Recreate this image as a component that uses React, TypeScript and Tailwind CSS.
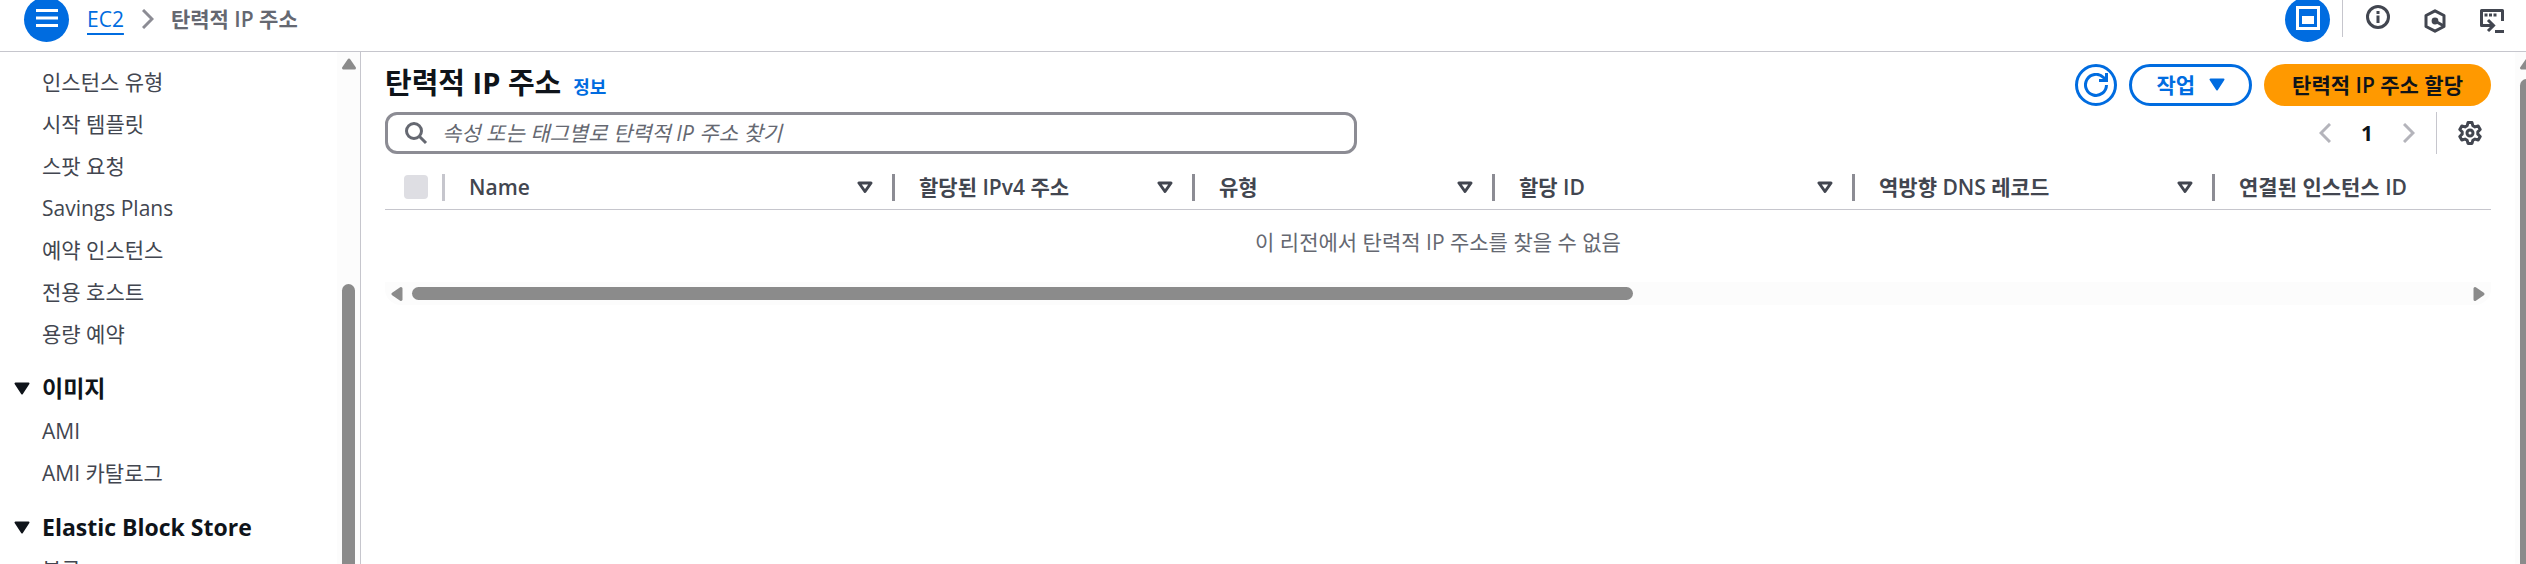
import React from 'react';

type IconProps = { className?: string };

const MenuIcon: React.FC<IconProps> = ({ className }) => (
  <svg viewBox="0 0 22 18" className={className} fill="currentColor" aria-hidden="true">
    <path d="M0 0h22v3H0zM0 7.500h22v3H0zM0 15h22v3H0z" />
  </svg>
);

const ChevronIcon: React.FC<IconProps> = ({ className }) => (
  <svg viewBox="0 0 12 20" className={className} fill="none" stroke="currentColor" strokeWidth="3" aria-hidden="true">
    <path d="M1 1l9 9-9 9" />
  </svg>
);

const PanelIcon: React.FC<IconProps> = ({ className }) => (
  <svg viewBox="0 0 24 24" className={className} aria-hidden="true">
    <path d="M1.500 1.500h21v21h-21z" fill="none" stroke="currentColor" strokeWidth="3" />
    <path d="M6 10h12v8H6z" fill="currentColor" />
  </svg>
);

const InfoIcon: React.FC<IconProps> = ({ className }) => (
  <svg viewBox="0 0 24 24" className={className} fill="none" stroke="currentColor" strokeWidth="3" aria-hidden="true">
    <circle cx="12" cy="12" r="10.5" />
    <path d="M12 10.500V18M12 6v3" />
  </svg>
);

const HexIcon: React.FC<IconProps> = ({ className }) => (
  <svg viewBox="0 0 24 24" className={className} fill="none" stroke="currentColor" strokeWidth="3" aria-hidden="true">
    <path d="M12 1.800l9 4.700v11l-9 4.700-9-4.700v-11z" strokeLinejoin="round" />
    <circle cx="12" cy="12" r="3.4" fill="currentColor" stroke="none" />
    <path d="M12 12l8 4.500" />
  </svg>
);

const ShellIcon: React.FC<IconProps> = ({ className }) => (
  <svg viewBox="0 0 24 24" className={className} fill="none" stroke="currentColor" strokeWidth="3" strokeLinejoin="round" aria-hidden="true">
    <path d="M22.500 12V1.500h-21v15H13" />
    <path d="M8 11l5.500 5.500L8 22" strokeLinejoin="miter" />
    <path d="M15 22.500h9" />
    <path d="M4.500 6h13" strokeDasharray="3 1.5" />
  </svg>
);

const SearchIcon: React.FC<IconProps> = ({ className }) => (
  <svg viewBox="0 0 24 24" className={className} fill="none" stroke="currentColor" strokeWidth="3" aria-hidden="true">
    <circle cx="10" cy="10" r="7.5" />
    <path d="M15 15l7 7" />
  </svg>
);

const RefreshIcon: React.FC<IconProps> = ({ className }) => (
  <svg viewBox="0 0 24 24" className={className} fill="none" stroke="currentColor" strokeWidth="3" aria-hidden="true">
    <path d="M22.500 12a10.500 10.500 0 1 1-3-7.500L22 7" />
    <path d="M22.500 0v7.500H15" />
  </svg>
);

const GearIcon: React.FC<IconProps> = ({ className }) => (
  <svg viewBox="0 0 24 24" className={className} fill="none" stroke="currentColor" strokeWidth="3" strokeLinejoin="round" aria-hidden="true">
    <path d="M10 1.500h4l.8 3.200 2.200 1.200 3.200-.9 2 3.500-2.400 2.300v2.400l2.400 2.300-2 3.500-3.200-.9-2.200 1.200-.8 3.200h-4l-.8-3.200L7 18.100l-3.200.9-2-3.500 2.400-2.300v-2.400L1.800 8.500l2-3.500L7 5.900l2.200-1.200z" />
    <circle cx="12" cy="12" r="3" />
  </svg>
);

const CaretDown: React.FC<IconProps> = ({ className }) => (
  <svg viewBox="0 0 16 13" className={className} fill="currentColor" stroke="currentColor" strokeWidth="2" strokeLinejoin="round" aria-hidden="true">
    <path d="M1.500 1.500h13L8 11.500z" />
  </svg>
);

const SortIcon: React.FC<IconProps> = ({ className }) => (
  <svg viewBox="0 0 16 13" className={className} fill="none" stroke="currentColor" strokeWidth="3" strokeLinejoin="round" aria-hidden="true">
    <path d="M2 2h12L8 10.500z" />
  </svg>
);

const ScrollArrow: React.FC<IconProps> = ({ className }) => (
  <svg viewBox="0 0 16 12" className={className} fill="#8b8b8b" stroke="#8b8b8b" strokeWidth="3" strokeLinejoin="round" aria-hidden="true">
    <path d="M2.500 10h11L8 2z" />
  </svg>
);

const sections = [
  { items: ['인스턴스 유형', '시작 템플릿', '스팟 요청', 'Savings Plans', '예약 인스턴스', '전용 호스트', '용량 예약'] },
  { title: '이미지', items: ['AMI', 'AMI 카탈로그'] },
  { title: 'Elastic Block Store', items: ['볼륨'] },
];

const columns = [
  { label: 'Name', width: 'w-[450px]' },
  { label: '할당된 IPv4 주소', width: 'w-[300px]' },
  { label: '유형', width: 'w-[300px]' },
  { label: '할당 ID', width: 'w-[360px]' },
  { label: '역방향 DNS 레코드', width: 'w-[360px]' },
];

const TopBar: React.FC = () => (
  <header className="flex h-[52px] shrink-0 items-start justify-between border-b border-[#c6c6cd] pl-6 pr-[22px]">
    <div className="flex items-start">
      <button aria-label="메뉴" className="-mt-[3px] flex size-[45px] items-center justify-center rounded-full bg-[#006ce0] text-white">
        <MenuIcon className="-mt-1 h-[18px] w-[22px]" />
      </button>
      <nav aria-label="Breadcrumb" className="ml-[18px] flex h-[38px] items-center">
        <a href="#ec2" className="text-[#006ce0] underline decoration-2 underline-offset-[6px]">EC2</a>
        <ChevronIcon className="ml-[18px] h-5 w-3 text-[#8c8c94]" />
        <span className="ml-[17px] font-semibold text-[#656871]">탄력적 IP 주소</span>
      </nav>
    </div>
    <div className="flex items-start text-[#424650]">
      <button aria-label="패널" className="-mt-[3px] flex size-[45px] items-center justify-center rounded-full bg-[#006ce0] text-white">
        <PanelIcon className="-mt-1 size-6" />
      </button>
      <div className="ml-3 h-[37px] w-px bg-[#c6c6cd]" />
      <button aria-label="정보" className="ml-[23px] mt-[5px]"><InfoIcon className="size-6" /></button>
      <button aria-label="Amazon Q" className="ml-[33px] mt-[9px]"><HexIcon className="size-6" /></button>
      <button aria-label="CloudShell" className="ml-[33px] mt-[9px]"><ShellIcon className="size-6" /></button>
    </div>
  </header>
);

const Sidebar: React.FC = () => (
  <aside className="flex w-[361px] shrink-0 border-r border-[#c6c6cd]">
    <nav aria-label="EC2" className="flex-1 overflow-hidden pt-[9px]">
      {sections.map((section, i) => (
        <div key={i}>
          {section.title && (
            <button className="mb-px mt-3 flex h-[42px] w-full items-center pl-[14px] text-[23px] font-bold text-[#0f141a]">
              <CaretDown className="mr-3 h-[13px] w-4" />
              {section.title}
            </button>
          )}
          <ul className="text-[#424650]">
            {section.items.map(item => (
              <li key={item} className="flex h-[42px] items-center pl-[42px]">
                <a href="#item">{item}</a>
              </li>
            ))}
          </ul>
        </div>
      ))}
    </nav>
    <div className="flex w-[23px] flex-col items-center bg-[#fcfcfc] pt-[6px]">
      <ScrollArrow className="h-3 w-4" />
      <div className="mt-[214px] w-[13px] flex-1 rounded-t-full bg-[#8b8b8b]" />
    </div>
  </aside>
);

const AddressTable: React.FC = () => (
  <table className="w-full table-fixed border-collapse">
    <thead>
      <tr className="h-[43px] border-b border-[#c6c6cd] text-left text-[#424650]">
        <th className="w-[60px] p-0">
          <div className="flex h-[27px] items-center border-r-3 border-[#c6c6cd] pl-[19px]">
            <input type="checkbox" disabled aria-label="모두 선택" className="size-6 appearance-none rounded-[4px] bg-[#dedee3]" />
          </div>
        </th>
        {columns.map(col => (
          <th key={col.label} className={`${col.width} p-0 font-semibold`}>
            <div className="flex h-[27px] items-center justify-between border-r-3 border-[#8c8c94] pl-6 pr-[19px]">
              {col.label}
              <button aria-label={`${col.label} 정렬`}><SortIcon className="h-[13px] w-4" /></button>
            </div>
          </th>
        ))}
        <th className="p-0 pl-6 font-semibold">연결된 인스턴스 ID</th>
      </tr>
    </thead>
    <tbody>
      <tr>
        <td colSpan={7} className="h-[73px] p-0 pb-2 text-center text-[#656871]">
          이 리전에서 탄력적 IP 주소를 찾을 수 없음
        </td>
      </tr>
    </tbody>
  </table>
);

export default function App() {
  return (
    <div className="flex h-screen flex-col overflow-hidden bg-white font-['Open_Sans','Noto_Sans_CJK_KR',sans-serif] text-[21px] leading-[30px] text-[#0f141a]">
      <TopBar />
      <div className="flex min-h-0 flex-1">
        <Sidebar />
        <main className="min-w-0 flex-1 pl-6 pr-6 pt-3">
          {/* Title and actions */}
          <div className="flex h-[42px] items-center justify-between">
            <div className="flex items-baseline gap-3 pb-[2px]">
              <h1 className="text-[29px] font-bold">탄력적 IP 주소</h1>
              <a href="#info" className="text-lg font-semibold text-[#006ce0]">정보</a>
            </div>
            <div className="flex gap-3 font-semibold">
              <button aria-label="새로 고침" className="flex size-[42px] items-center justify-center rounded-full border-3 border-[#006ce0] text-[#006ce0]">
                <RefreshIcon className="size-6" />
              </button>
              <button className="flex h-[42px] items-center gap-[14px] rounded-full border-3 border-[#006ce0] px-6 pb-px text-[#006ce0]">
                작업
                <CaretDown className="h-[13px] w-4" />
              </button>
              <button className="h-[42px] rounded-full bg-[#ff9900] px-7 pb-px">탄력적 IP 주소 할당</button>
            </div>
          </div>

          {/* Filter and pagination */}
          <div className="mt-[6px] flex h-[42px] items-center justify-between">
            <label className="flex h-[42px] w-[972px] items-center rounded-xl border-3 border-[#8c8c94] pl-4">
              <SearchIcon className="size-6 text-[#656871]" />
              <input
                type="search"
                aria-label="탄력적 IP 주소 찾기"
                placeholder="속성 또는 태그별로 탄력적 IP 주소 찾기"
                className="ml-[14px] flex-1 outline-none placeholder:italic placeholder:text-[#656871]"
              />
            </label>
            <div className="flex h-[42px] items-center pr-[9px]">
              <button aria-label="이전 페이지" disabled><ChevronIcon className="h-5 w-3 rotate-180 text-[#b4b4bb]" /></button>
              <button className="mx-[30px] font-bold">1</button>
              <button aria-label="다음 페이지" disabled><ChevronIcon className="h-5 w-3 text-[#b4b4bb]" /></button>
              <div className="ml-[21px] h-[42px] w-px bg-[#c6c6cd]" />
              <button aria-label="기본 설정" className="ml-[21px] text-[#424650]"><GearIcon className="size-6" /></button>
            </div>
          </div>

          <div className="mt-3">
            <AddressTable />
          </div>

          {/* Horizontal scroll track */}
          <div className="flex h-[23px] items-center rounded-b-2xl bg-[#fcfcfc] px-1">
            <ScrollArrow className="h-3 w-4 -rotate-90" />
            <div className="mx-[7px] flex-1">
              <div className="h-[13px] w-[59.5%] rounded-full bg-[#8b8b8b]" />
            </div>
            <ScrollArrow className="h-3 w-4 rotate-90" />
          </div>
        </main>
        <div className="flex w-[11px] shrink-0 flex-col overflow-hidden bg-[#fcfcfc] pl-1 pt-[6px]">
          <ScrollArrow className="h-3 w-4 shrink-0" />
          <div className="ml-px mt-[9px] w-[13px] flex-1 rounded-t-full bg-[#8b8b8b]" />
        </div>
      </div>
    </div>
  );
}
